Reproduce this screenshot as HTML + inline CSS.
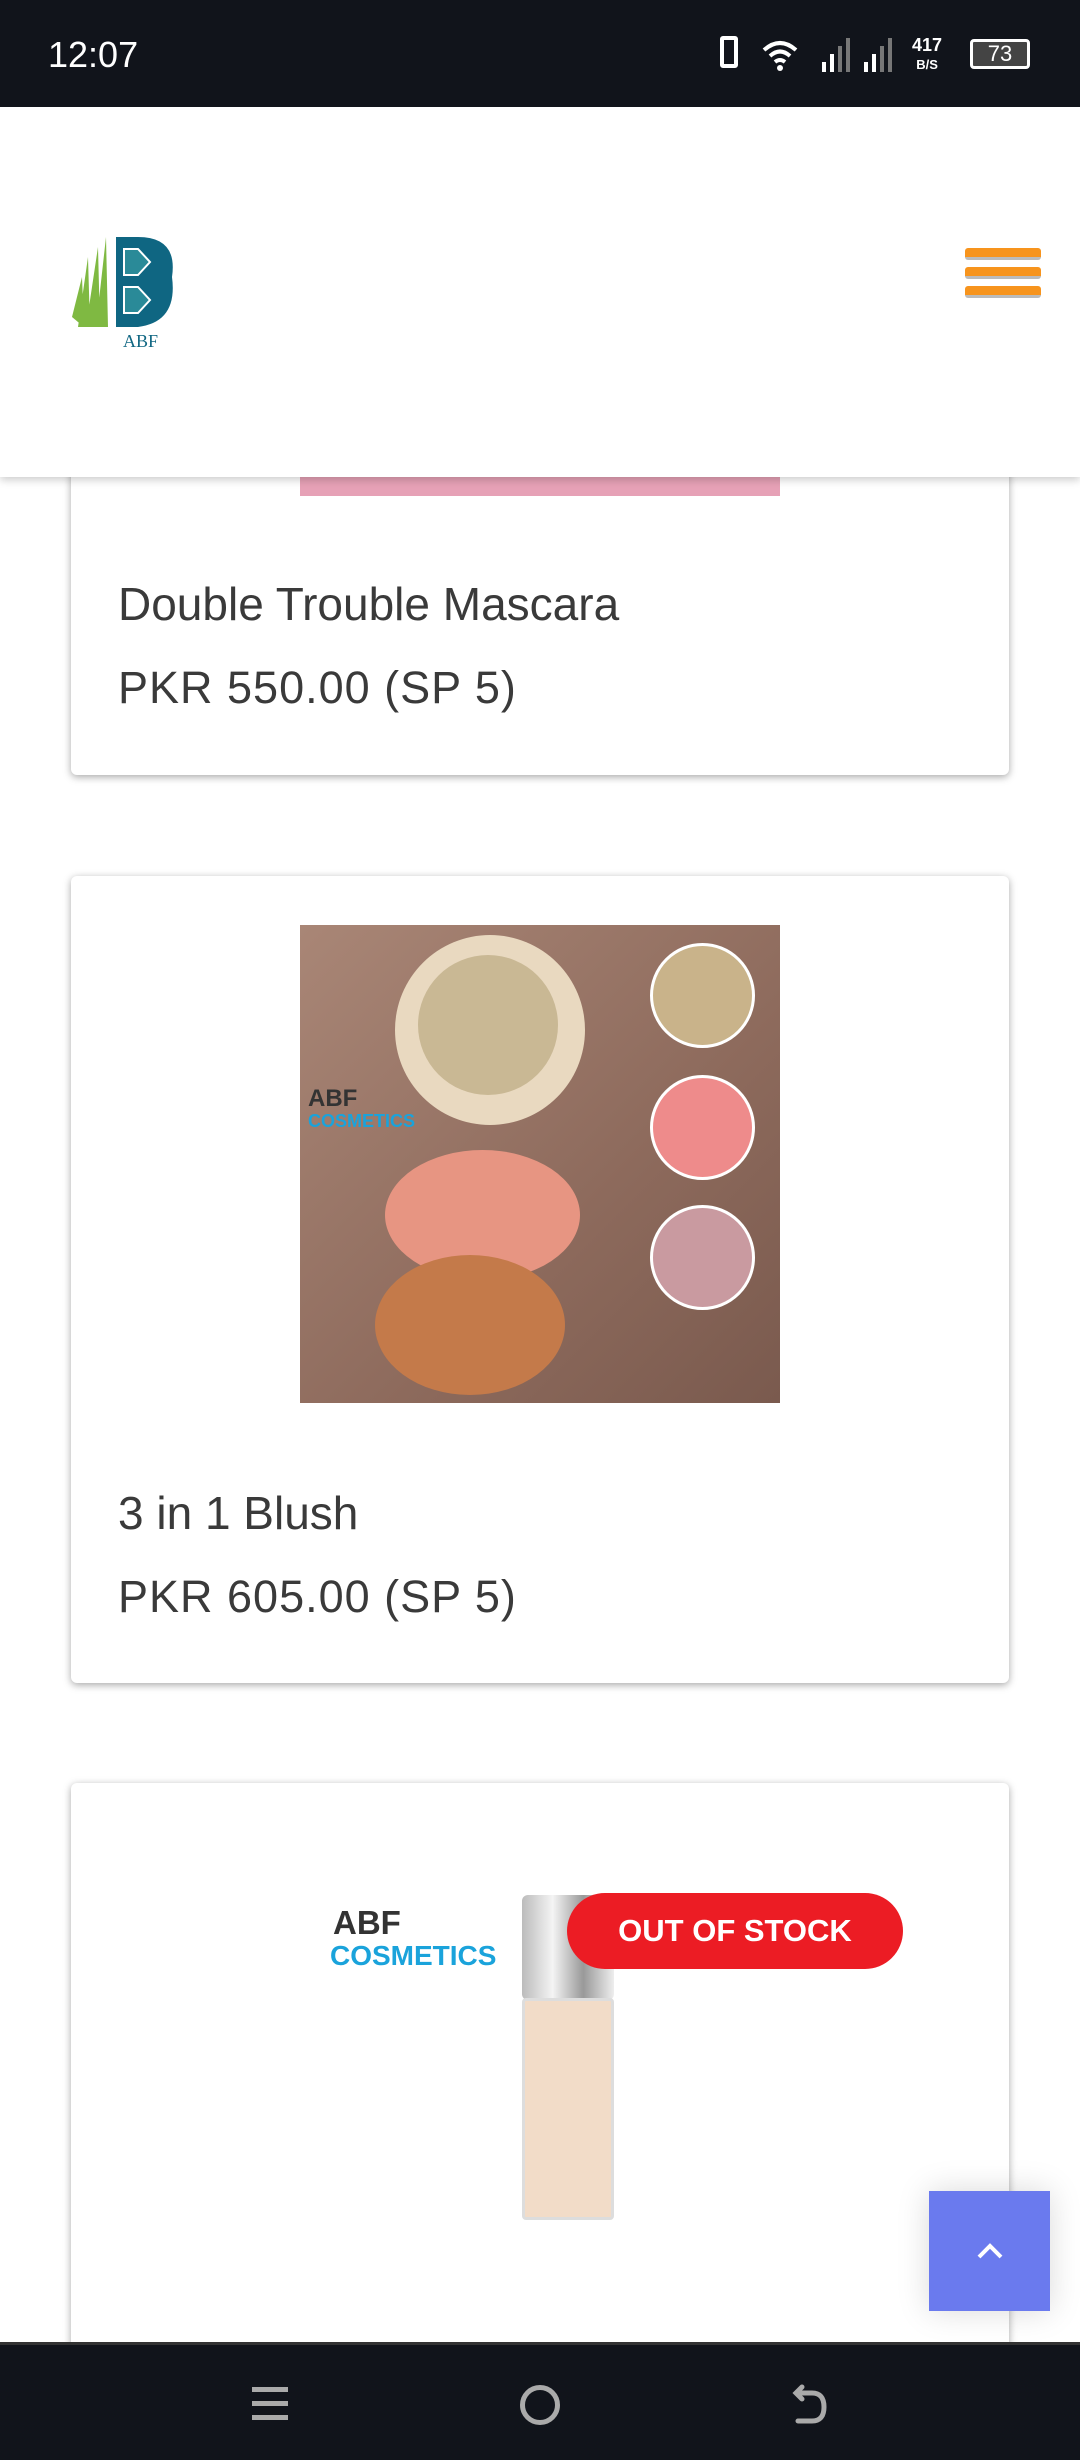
<!DOCTYPE html>
<html><head><meta charset="utf-8"><style>
*{margin:0;padding:0;box-sizing:border-box}
html,body{width:1080px;height:2460px;overflow:hidden}
body{background:#fff;font-family:"Liberation Sans",sans-serif;position:relative}
.abs{position:absolute}
.card{position:absolute;left:71px;width:938px;background:#fff;border-radius:6px;box-shadow:0 2px 8px rgba(0,0,0,.35)}
.t{position:absolute;left:118px;color:#3a3a3a;font-size:46px}
.p{position:absolute;left:118px;color:#3a3a3a;font-size:45px;letter-spacing:1px}
</style></head><body>
<div class="card" style="top:380px;height:395px"></div>
<div class="abs" style="left:300px;top:440px;width:480px;height:56px;background:#e6a1b6"></div>
<div class="t" style="top:577px">Double Trouble Mascara</div>
<div class="p" style="top:662px">PKR 550.00 (SP 5)</div>
<div class="card" style="top:876px;height:807px"></div>
<div class="abs" style="left:300px;top:925px;width:480px;height:478px;background:linear-gradient(135deg,#a98676,#8d6a5c 60%,#7a5a4e);overflow:hidden">
 <div class="abs" style="left:95px;top:10px;width:190px;height:190px;border-radius:50%;background:#e9d9c0"></div>
 <div class="abs" style="left:118px;top:30px;width:140px;height:140px;border-radius:50%;background:#c9b894"></div>
 <div class="abs" style="left:85px;top:225px;width:195px;height:130px;border-radius:50%;background:#e79582"></div>
 <div class="abs" style="left:75px;top:330px;width:190px;height:140px;border-radius:50%;background:#c47a4a"></div>
 <div class="abs" style="left:350px;top:18px;width:105px;height:105px;border-radius:50%;background:#c9b38a;border:3px solid #fff"></div>
 <div class="abs" style="left:350px;top:150px;width:105px;height:105px;border-radius:50%;background:#ee8b8b;border:3px solid #fff"></div>
 <div class="abs" style="left:350px;top:280px;width:105px;height:105px;border-radius:50%;background:#c99aa0;border:3px solid #fff"></div>
 <div class="abs" style="left:8px;top:160px;font-size:24px;font-weight:bold;color:#333">ABF</div>
 <div class="abs" style="left:8px;top:186px;font-size:18px;font-weight:bold;color:#1aa3db">COSMETICS</div>
</div>
<div class="t" style="top:1486px">3 in 1 Blush</div>
<div class="p" style="top:1571px">PKR 605.00 (SP 5)</div>
<div class="card" style="top:1783px;height:677px;border-radius:6px 6px 0 0"></div>
<div class="abs" style="left:333px;top:1904px;font-size:33px;font-weight:bold;color:#333">ABF</div>
<div class="abs" style="left:330px;top:1940px;font-size:28px;font-weight:bold;color:#1aa3db">COSMETICS</div>
<div class="abs" style="left:522px;top:1895px;width:92px;height:105px;background:linear-gradient(90deg,#bbb,#f4f4f4,#999,#eee);border-radius:6px"></div>
<div class="abs" style="left:522px;top:1998px;width:92px;height:222px;background:#f2dcc8;border:3px solid #ddd;border-radius:4px"></div>
<div class="abs" style="left:567px;top:1893px;width:336px;height:76px;background:#ec1c24;border-radius:38px;color:#fff;font-weight:bold;font-size:31px;text-align:center;line-height:76px">OUT OF STOCK</div>
<div class="abs" style="left:929px;top:2191px;width:121px;height:120px;background:#6a7aee;box-shadow:0 0 30px rgba(0,0,0,.15)">
<svg width="121" height="120"><path d="M50 66 L61 55 L72 66" stroke="#fff" stroke-width="4" fill="none"/></svg></div>
<div class="abs" style="left:0;top:107px;width:1080px;height:370px;background:#fff;box-shadow:0 3px 8px rgba(0,0,0,.2)">
 <svg class="abs" style="left:68px;top:120px" width="112" height="125" viewBox="0 0 112 125">
  <path d="M10 100 L20 30 L22 100 Z M18 100 L30 20 L32 100Z M28 100 L38 10 L40 100Z M4 90 L14 50 L16 100Z" fill="#7fb942"/>
  <path d="M48 10 H70 Q110 10 104 50 Q110 95 70 100 H48 Z" fill="#0f6682"/>
  <path d="M56 22 H70 L82 35 L70 48 H56Z M56 60 H70 L82 73 L70 86 H56Z" fill="#2a8a98" stroke="#fff" stroke-width="2"/>
  <text x="55" y="120" font-size="18" fill="#0f6682" font-family="Liberation Serif">ABF</text>
 </svg>
 <div class="abs" style="left:965px;top:141px;width:76px;height:12px;background:#f7941d;border-radius:3px;border-bottom:3px solid #bbb"></div>
 <div class="abs" style="left:965px;top:160px;width:76px;height:12px;background:#f7941d;border-radius:3px;border-bottom:3px solid #bbb"></div>
 <div class="abs" style="left:965px;top:179px;width:76px;height:12px;background:#f7941d;border-radius:3px;border-bottom:3px solid #bbb"></div>
</div>
<div class="abs" style="left:0;top:0;width:1080px;height:107px;background:#11141b;color:#fff">
 <div class="abs" style="left:48px;top:34px;font-size:36px">12:07</div>
 <div class="abs" style="left:720px;top:36px;width:18px;height:32px;border:4px solid #fff;border-radius:3px"></div>
 <svg class="abs" style="left:760px;top:36px" width="40" height="36"><path d="M4 14 Q20 0 36 14 M10 20 Q20 11 30 20 M15 26 Q20 22 25 26" stroke="#fff" stroke-width="4" fill="none"/><circle cx="20" cy="32" r="3" fill="#fff"/></svg>
 <svg class="abs" style="left:820px;top:38px" width="80" height="34"><rect x="2" y="24" width="4" height="10" fill="#fff"/><rect x="10" y="16" width="4" height="18" fill="#fff"/><rect x="18" y="8" width="4" height="26" fill="#777"/><rect x="26" y="0" width="4" height="34" fill="#777"/><rect x="44" y="24" width="4" height="10" fill="#fff"/><rect x="52" y="16" width="4" height="18" fill="#fff"/><rect x="60" y="8" width="4" height="26" fill="#777"/><rect x="68" y="0" width="4" height="34" fill="#777"/></svg>
 <div class="abs" style="left:912px;top:36px;font-size:18px;font-weight:bold;line-height:18px;text-align:center">417<br><span style="font-size:13px">B/S</span></div>
 <div class="abs" style="left:970px;top:39px;width:60px;height:30px;border:3px solid #fff;border-radius:4px;font-size:22px;text-align:center;line-height:24px;background:#444">73</div>
</div>
<div class="abs" style="left:0;top:2342px;width:1080px;height:118px;background:#11141b;border-top:3px solid #333">
 <div class="abs" style="left:252px;top:42px;width:36px;height:5px;background:#aaa;box-shadow:0 14px 0 #aaa,0 28px 0 #aaa"></div>
 <div class="abs" style="left:520px;top:40px;width:40px;height:40px;border:5px solid #aaa;border-radius:50%"></div>
 <svg class="abs" style="left:790px;top:38px" width="40" height="44"><path d="M12 4 L6 10 L12 16 M6 10 H22 Q34 10 34 24 Q34 38 22 38 H8" stroke="#aaa" stroke-width="5" fill="none" stroke-linecap="round"/></svg>
</div>
</body></html>
